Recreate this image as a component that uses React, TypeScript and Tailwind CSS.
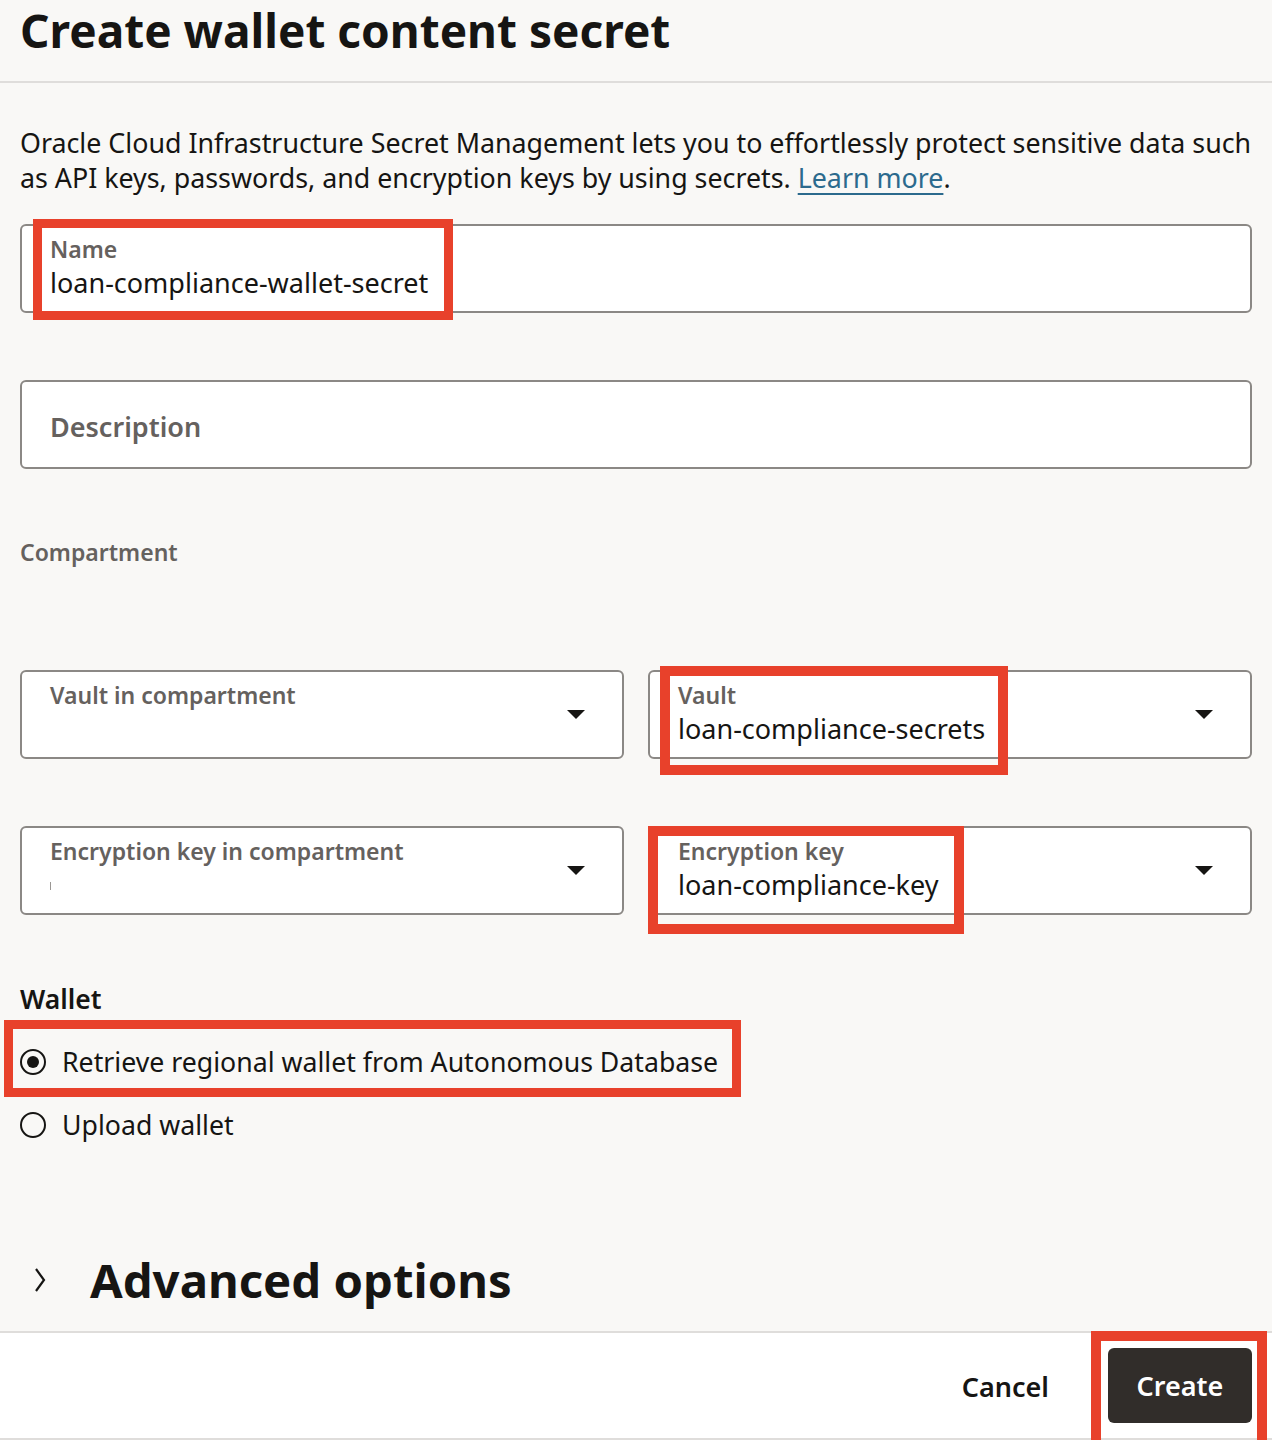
import React from "react";

const font = "font-['Noto_Sans',sans-serif]";

function Caret() {
  return (
    <svg width="18" height="9" viewBox="0 0 18 9" className="shrink-0">
      <polygon points="0,0 18,0 9,9" fill="#161513" />
    </svg>
  );
}

function RedBox({ className }: { className: string }) {
  return <div className={"absolute border-[#e8412b] pointer-events-none " + className} />;
}

function SelectField({
  label,
  value,
  tick,
  children,
}: {
  label: string;
  value?: string;
  tick?: boolean;
  children?: React.ReactNode;
}) {
  return (
    <div className="relative">
      <div className="h-[89px] bg-white border-2 border-[#8b8885] rounded-[6px] flex items-center pl-[28px] pr-[37px]">
        <div className="flex-1 self-stretch pt-[9px]">
          <div className="text-[23px] leading-[28px] font-semibold text-[#65615e]">{label}</div>
          {value ? (
            <div className="mt-[3px] text-[27px] leading-[34px] text-[#161513]">{value}</div>
          ) : tick ? (
            <div className="mt-[3px] h-[34px] flex items-center">
              <span className="block w-px h-[8px] bg-[#9a9794] mt-[2px]" />
            </div>
          ) : null}
        </div>
        <Caret />
      </div>
      {children}
    </div>
  );
}

function Radio({ checked, label }: { checked?: boolean; label: string }) {
  return (
    <div className="flex items-center h-[35px]">
      <span className="w-[26px] h-[26px] rounded-full border-2 border-[#161513] flex items-center justify-center shrink-0">
        {checked ? <span className="w-[12px] h-[12px] rounded-full bg-[#161513]" /> : null}
      </span>
      <span className="ml-[16px] text-[26.7px] leading-[35px] text-[#161513] whitespace-nowrap">{label}</span>
    </div>
  );
}

export default function App() {
  return (
    <div className={"relative w-[1272px] h-[1440px] overflow-hidden bg-[#f9f8f6] flex flex-col " + font}>
      {/* Header */}
      <div className="h-[83px] shrink-0 border-b-2 border-[#dfdddb] px-5">
        <h1 className="pt-[2px] text-[46px] leading-[56px] font-bold text-[#161513] whitespace-nowrap">
          Create wallet content secret
        </h1>
      </div>

      {/* Body */}
      <div className="flex-1 px-5 flex flex-col">
        <p className="mt-[42px] text-[26.8px] leading-[35px] text-[#161513] whitespace-nowrap">
          Oracle Cloud Infrastructure Secret Management lets you to effortlessly protect sensitive data such
          <br />
          as API keys, passwords, and encryption keys by using secrets.{" "}
          <span className="text-[#2c6a8d] underline decoration-2 underline-offset-[5px]">Learn more</span>.
        </p>

        {/* Name */}
        <div className="relative mt-[29px]">
          <div className="h-[89px] bg-white border-2 border-[#8b8885] rounded-[6px] pl-[28px] pt-[9px]">
            <div className="text-[23px] leading-[28px] font-semibold text-[#65615e]">Name</div>
            <div className="mt-[3px] text-[27px] leading-[34px] text-[#161513]">loan-compliance-wallet-secret</div>
          </div>
          <RedBox className="left-[13px] top-[-5px] w-[420px] h-[101px] border-[9px]" />
        </div>

        {/* Description */}
        <div className="mt-[67px] h-[89px] bg-white border-2 border-[#8b8885] rounded-[6px] pl-[28px] pt-[28px]">
          <div className="text-[27px] leading-[34px] font-semibold text-[#65615e]">Description</div>
        </div>

        {/* Compartment */}
        <div className="mt-[69px] text-[23px] leading-[28px] font-semibold text-[#65615e]">Compartment</div>

        <div className="mt-[104px] grid grid-cols-2 gap-6">
          <SelectField label="Vault in compartment" />
          <SelectField label="Vault" value="loan-compliance-secrets">
            <RedBox className="left-[12px] top-[-4px] w-[348px] h-[109px] border-[10px]" />
          </SelectField>
        </div>

        <div className="mt-[67px] grid grid-cols-2 gap-6">
          <SelectField label="Encryption key in compartment" tick />
          <SelectField label="Encryption key" value="loan-compliance-key">
            <RedBox className="left-0 top-0 w-[316px] h-[108px] border-[10px]" />
          </SelectField>
        </div>

        {/* Wallet */}
        <div className="mt-[67px] text-[26.5px] leading-[34px] font-semibold text-[#161513]">Wallet</div>
        <div className="relative mt-[28px]">
          <Radio checked label="Retrieve regional wallet from Autonomous Database" />
          <RedBox className="left-[-16px] top-[-24px] w-[737px] h-[77px] border-[9px]" />
        </div>
        <div className="mt-[28px]">
          <Radio label="Upload wallet" />
        </div>

        {/* Advanced options */}
        <div className="mt-[110px] flex items-center h-[56px]">
          <svg width="14" height="26" viewBox="0 0 14 26" className="ml-[13px] shrink-0">
            <path d="M3 2 L11 13 L3 24" fill="none" stroke="#161513" strokeWidth="2.2" />
          </svg>
          <span className="ml-[43px] text-[47.3px] leading-[56px] font-bold text-[#161513] whitespace-nowrap">
            Advanced options
          </span>
        </div>
      </div>

      {/* Footer */}
      <div className="relative h-[109px] shrink-0 bg-white border-t-2 border-b-2 border-[#dfdddb] flex items-center justify-end pr-5">
        <button className="text-[27px] leading-[34px] font-semibold text-[#161513] mr-[59px] mt-[2px]">Cancel</button>
        <button className="w-[144px] h-[75px] rounded-[6px] bg-[#312d2a] text-white text-[27px] leading-[34px] font-semibold">
          Create
        </button>
        <RedBox className="left-[1091px] top-[-2px] w-[176px] h-[120px] border-[10px]" />
      </div>
    </div>
  );
}
